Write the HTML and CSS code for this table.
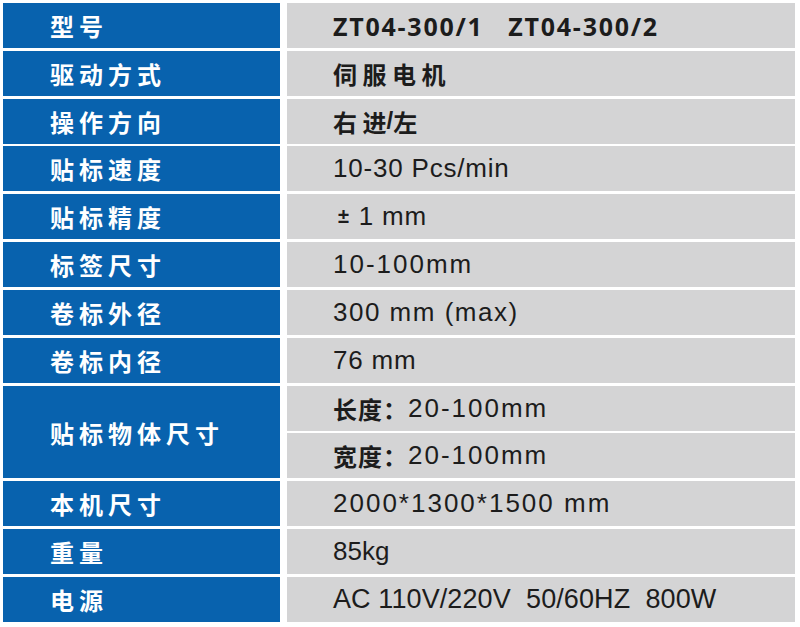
FILE: index.html
```html
<!DOCTYPE html>
<html lang="zh">
<head>
<meta charset="utf-8">
<title>参数</title>
<link rel="stylesheet" href="styles.css">
</head>
<body>
<div class="spec">
  <div class="k">型号</div>
  <div class="v model">ZT04-300/1   ZT04-300/2</div>

  <div class="k">驱动方式</div>
  <div class="v cjk">伺服电机</div>

  <div class="k">操作方向</div>
  <div class="v cjk">右<span class="ns">进</span><span class="slash">/</span>左</div>

  <div class="k">贴标速度</div>
  <div class="v num">10-30 Pcs/min</div>

  <div class="k">贴标精度</div>
  <div class="v num"><span class="pm">±</span> 1 mm</div>

  <div class="k">标签尺寸</div>
  <div class="v num wide">10-100mm</div>

  <div class="k">卷标外径</div>
  <div class="v num mid">300 mm (max)</div>

  <div class="k">卷标内径</div>
  <div class="v num">76 mm</div>

  <div class="k span2">贴标物体尺寸</div>
  <div class="v num wide"><span class="lab">长度：</span>20-100mm</div>
  <div class="v num wide"><span class="lab">宽度：</span>20-100mm</div>

  <div class="k">本机尺寸</div>
  <div class="v num wide">2000*1300*1500 mm</div>

  <div class="k">重量</div>
  <div class="v num tight">85kg</div>

  <div class="k">电源</div>
  <div class="v num power">AC 110V/220V  50/60HZ  800W</div>
</div>
</body>
</html>
```

FILE: styles.css
```css
html, body {
  margin: 0;
  padding: 0;
  background: #ffffff;
}

.spec {
  display: grid;
  grid-template-columns: 277px 508px;
  grid-auto-rows: 45px;
  column-gap: 7px;
  row-gap: 2.83px;
  padding: 3px 0 0 3px;
}

.k {
  background: #0862ae;
  color: #ffffff;
  font-family: "Noto Sans CJK SC", "Noto Sans", sans-serif;
  font-weight: 700;
  font-size: 24px;
  letter-spacing: 5px;
  padding-left: 47px;
  display: flex;
  align-items: center;
}

.k.span2 {
  grid-row: span 2;
}

.v {
  background: #d4d4d5;
  color: #1c1c1c;
  padding-left: 46px;
  display: flex;
  align-items: center;
  white-space: pre;
}

.model {
  font-family: "Open Sans", "Noto Sans", sans-serif;
  font-weight: 700;
  font-size: 25px;
  letter-spacing: 1.75px;
}

.cjk {
  font-family: "Noto Sans CJK SC", "Noto Sans", sans-serif;
  font-weight: 700;
  font-size: 24px;
  letter-spacing: 5.5px;
}

.ns {
  letter-spacing: 0;
}

.slash {
  font-family: "Liberation Sans", Arial, sans-serif;
  font-weight: 700;
  letter-spacing: 0;
}

.num {
  font-family: "Liberation Sans", Arial, sans-serif;
  font-size: 26px;
  letter-spacing: 0.8px;
}

.num.wide {
  letter-spacing: 2px;
}

.num.mid {
  letter-spacing: 1.5px;
}

.num.tight {
  letter-spacing: 0;
}

.num.power {
  font-size: 27px;
  letter-spacing: 0.1px;
}

.pm {
  font-size: 20px;
  font-weight: 700;
  padding-left: 5px;
  padding-right: 1px;
}

.lab {
  font-family: "Noto Sans CJK SC", "Noto Sans", sans-serif;
  font-weight: 700;
  font-size: 24px;
  letter-spacing: 1px;
}
```
